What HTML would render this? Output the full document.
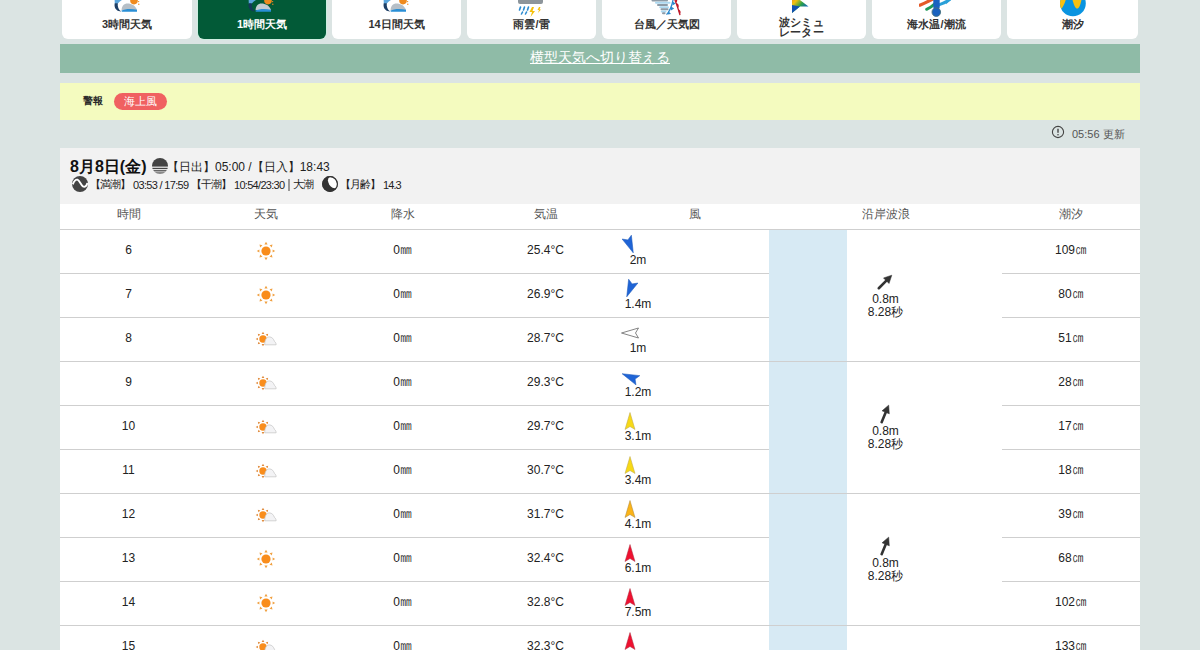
<!DOCTYPE html>
<html><head><meta charset="utf-8">
<style>
*{box-sizing:border-box}
html,body{margin:0;padding:0}
body{width:1200px;height:650px;overflow:hidden;position:relative;background:#dbe4e3;font-family:"Liberation Sans",sans-serif;color:#222}
.tab{position:absolute;top:-10px;height:49px;background:#fff;border-radius:0 0 6px 6px;text-align:center}
.tab.on{background:#025a37;box-shadow:0 0 0 1px #cdeee0}
.tab .lb{position:absolute;left:0;right:0;top:28px;font-size:11px;font-weight:bold;line-height:13px;color:#333}
.tab.on .lb{color:#fff}
.tab svg{position:absolute;top:10px}
#gbar{position:absolute;left:60px;top:44px;width:1080px;height:29px;background:#8fbba7;text-align:center;color:#fff;font-size:14px;line-height:27px}
#gbar span{text-decoration:underline}
#ybar{position:absolute;left:60px;top:83px;width:1080px;height:37px;background:#f4fbbf}
#upd{position:absolute;left:1072px;top:127px;font-size:11px;color:#555;line-height:14px}
#panel{position:absolute;left:60px;top:148px;width:1080px;height:56px;background:#f2f2f2}
#thead{position:absolute;left:60px;top:204px;width:1080px;height:26px;background:#fff;border-bottom:1px solid #cfcfcf}
.th{position:absolute;top:0;height:25px;line-height:20px;font-size:12px;color:#555;text-align:center}
#tbody{position:absolute;left:60px;top:230px;width:1080px;height:420px;background:#fff}
.row{position:absolute;left:0;width:1200px;height:44px}
.row .c{position:absolute;top:0;height:43px;line-height:40px;font-size:12px;text-align:center;color:#222}
.line{position:absolute;height:1px;background:#cfcfcf}
.wx,.ar{position:absolute}
.sp{position:absolute;left:620px;width:36px;text-align:center;font-size:12px;line-height:14px;color:#222}
.wt{position:absolute;left:769px;width:233px;text-align:center;font-size:12px;line-height:13px;color:#222}
.pt{position:absolute;font-size:11px;line-height:14px;color:#222;white-space:nowrap;letter-spacing:-0.75px}
.dg{letter-spacing:-0.5px}
.u{font-style:normal;display:inline-block;line-height:12px;transform:scaleY(1.32);transform-origin:50% 10.5px}
#blue{position:absolute;left:769px;top:230px;width:78px;height:420px;background:#d7eaf4}
</style></head><body>

<div class="tab" style="left:62px;width:130px">
<svg width="26" height="13" viewBox="0 0 26 13" style="left:52px"><circle cx="20" cy="0.6" r="3.8" fill="#ef8a1e"/><circle cx="24.6" cy="1.6" r="0.7" fill="#ef8a1e"/><circle cx="24.8" cy="4.3" r="0.7" fill="#ef8a1e"/><path d="M0.6,-1 L9.5,-1 C7,0.5 5,2 3.6,3.8 L0.8,3.8Z" fill="#5aa5dc"/><path d="M0.8,3.2 C0,6 1,9.5 4.5,11 L7.2,11.6 C4.5,9.5 3.4,6.5 3.8,3.2Z" fill="#1d3f66"/><path d="M7.6,10 C7.6,6 10,3.4 13.5,3.4 C17.5,3.4 21.5,5.5 23,10Z" fill="#b6bfc7"/><path d="M7.2,10.8 C11,8.6 18,8.6 23,9.8 L23,11.8 L8,11.8Z" fill="#2a8fd6"/></svg>
<div class="lb"><span id="m_tab1">3時間天気</span></div></div>
<div class="tab on" style="left:198px;width:128px">
<svg width="26" height="13" viewBox="0 0 26 13" style="left:50px"><circle cx="20" cy="0.6" r="3.8" fill="#ef8a1e"/><circle cx="24.6" cy="1.6" r="0.7" fill="#ef8a1e"/><circle cx="24.8" cy="4.3" r="0.7" fill="#ef8a1e"/><path d="M0.6,-1 L9.5,-1 C7,0.5 5,2 3.6,3.8 L0.8,3.8Z" fill="#5aa5dc"/><path d="M0.8,3.2 C0,6 1,9.5 4.5,11 L7.2,11.6 C4.5,9.5 3.4,6.5 3.8,3.2Z" fill="#17385a"/><path d="M7.6,10 C7.6,6 10,3.4 13.5,3.4 C17.5,3.4 21.5,5.5 23,10Z" fill="#c4ccd2"/><path d="M7.2,10.8 C11,8.6 18,8.6 23,9.8 L23,11.8 L8,11.8Z" fill="#2a8fd6"/></svg>
<div class="lb">1時間天気</div></div>
<div class="tab" style="left:332px;width:129px">
<svg width="26" height="13" viewBox="0 0 26 13" style="left:51px"><circle cx="20" cy="0.6" r="3.8" fill="#ef8a1e"/><circle cx="24.6" cy="1.6" r="0.7" fill="#ef8a1e"/><circle cx="24.8" cy="4.3" r="0.7" fill="#ef8a1e"/><path d="M0.6,-1 L9.5,-1 C7,0.5 5,2 3.6,3.8 L0.8,3.8Z" fill="#5aa5dc"/><path d="M0.8,3.2 C0,6 1,9.5 4.5,11 L7.2,11.6 C4.5,9.5 3.4,6.5 3.8,3.2Z" fill="#1d3f66"/><path d="M7.6,10 C7.6,6 10,3.4 13.5,3.4 C17.5,3.4 21.5,5.5 23,10Z" fill="#b6bfc7"/><path d="M7.2,10.8 C11,8.6 18,8.6 23,9.8 L23,11.8 L8,11.8Z" fill="#2a8fd6"/></svg>
<div class="lb">14日間天気</div></div>
<div class="tab" style="left:467px;width:129px">
<svg width="30" height="18" viewBox="0 0 30 18" style="left:50px"><rect x="1" y="-4" width="25" height="8" rx="2" fill="#8d959b"/><g stroke="#2b8ad0" stroke-width="1.6" stroke-linecap="round"><path d="M2.5,10 L3.5,7"/><path d="M6.5,10 L7.5,7"/><path d="M10.5,10 L11.5,7"/><path d="M4.5,14 L5.5,12"/><path d="M8.5,14 L9.5,12"/></g><path d="M15,7 L12.5,12 L15,12 L13.5,17 L18,11 L15.5,11 L17,7Z" fill="#f5c00a"/><path d="M22,7 L20.5,10 L22,10 L21,13 L24,9.5 L22.5,9.5 L23.5,7Z" fill="#f5c00a"/></svg>
<div class="lb">雨雲/雷</div></div>
<div class="tab" style="left:602px;width:129px">
<svg width="36" height="17" viewBox="0 0 36 17" style="left:48px"><g stroke-linecap="round" stroke-width="2"><path d="M2.5,0.6 L17,0.6" stroke="#8e9ba6"/><path d="M6,2.8 L19.5,2.8" stroke="#acd8f0"/><path d="M8,5 L17,5" stroke="#8e9ba6"/><path d="M10.2,7.2 L18,7.2" stroke="#acd8f0"/><path d="M11.5,9.3 L17.5,9.3" stroke="#8e9ba6"/><path d="M11.8,11.4 L15.5,11.4" stroke="#acd8f0"/><path d="M13,13.3 L14.5,13.3" stroke="#8e9ba6"/></g><path d="M16.5,14.6 C19.5,11.5 22,6 23.2,-1" stroke="#2b88cc" stroke-width="1.3" fill="none"/><path d="M22.2,1.2 L25.8,3.4 L22.8,5.2Z M21.1,6.6 L24.2,8.6 L20.9,10.4Z M18.5,11.2 L21,14 L17.5,14.6Z" fill="#2b88cc"/><path d="M24.6,-1 C26.5,4 28.5,9 30,15.2" stroke="#c01a2a" stroke-width="1.3" fill="none"/><path d="M26.2,3.2 C29,3.2 29.5,7 27.6,8 Z M28.2,9.4 C31,9.8 31.3,13.5 29.4,14 Z M25,-1 C27.5,-1 28,1.5 26,2.5Z" fill="#c01a2a"/></svg>
<div class="lb">台風／天気図</div></div>
<div class="tab" style="left:737px;width:129px">
<svg width="20" height="14" viewBox="0 0 20 14" style="left:54px"><defs><linearGradient id="wg" x1="0" y1="0" x2="1" y2="1"><stop offset="0" stop-color="#f47a20"/><stop offset="0.3" stop-color="#f0c010"/><stop offset="0.55" stop-color="#2aa04a"/><stop offset="0.8" stop-color="#1060c0"/></linearGradient></defs><path d="M1,-6 L17.5,6.5 L9,6.5 L1,13Z" fill="url(#wg)"/><path d="M1,5 L9,6.5 L1,13Z" fill="#1050b0"/></svg>
<div class="lb" style="top:26px;letter-spacing:0.3px">波シミュ</div><div class="lb" style="top:36px;letter-spacing:0.3px">レーター</div></div>
<div class="tab" style="left:872px;width:129px">
<svg width="36" height="17" viewBox="0 0 36 17" style="left:47px"><path d="M0.8,5.2 C4.5,3.6 9,1.6 15,-1.5" stroke="#e45a28" stroke-width="3.2" stroke-linecap="round" fill="none"/><path d="M7.6,9.3 C10.5,8.2 13,6.5 15.5,4" stroke="#1f9a58" stroke-width="3" stroke-linecap="round" fill="none"/><path d="M20.5,4.6 C24,3.6 27,2.2 31,-1" stroke="#2aa0d8" stroke-width="3" stroke-linecap="round" fill="none"/><path d="M27,4.2 L34.5,-2 L27.5,-1.5Z" fill="#2aa0d8"/><rect x="14.3" y="-4" width="6.4" height="14" rx="3" fill="#1a62c0"/><circle cx="17.3" cy="12.1" r="4.3" fill="#1a62c0" stroke="#46707e" stroke-width="0.9"/></svg>
<div class="lb">海水温/潮流</div></div>
<div class="tab" style="left:1007px;width:131px">
<svg width="28" height="18" viewBox="0 0 28 18" style="left:52px"><defs><clipPath id="tc"><circle cx="13.9" cy="3.4" r="12.9"/></clipPath></defs><circle cx="13.9" cy="3.4" r="12.9" fill="#0a94e0"/><g clip-path="url(#tc)" fill="#f7c010"><path d="M-1,-6 L7.8,-6 C7.2,0 5,6 2.2,8.8 L-1,8.8Z"/><path d="M12.6,-6 C13.4,2 16,8.6 18.1,8.6 C20.5,8.6 22.6,2 23.2,-6Z"/></g></svg>
<div class="lb"><span id="m_tab8">潮汐</span></div></div>

<div id="gbar"><span id="m_gbar">横型天気へ切り替える</span></div>
<div id="ybar">
<div style="position:absolute;left:22.5px;top:10.5px;font-size:10px;font-weight:bold;line-height:14px;color:#2a2a2a"><span id="m_kh">警報</span></div>
<div style="position:absolute;left:54px;top:10px;width:53px;height:17px;border-radius:9px;background:#f06161;color:#fff;font-size:11px;line-height:17px;text-align:center"><span id="m_badge">海上風</span></div>
</div>
<svg width="14" height="14" viewBox="0 0 14 14" style="position:absolute;left:1051px;top:125px"><circle cx="7" cy="7" r="5.6" fill="none" stroke="#444" stroke-width="1.1"/><path d="M7,3.8 L7,7.8" stroke="#444" stroke-width="1.4"/><circle cx="7" cy="9.8" r="0.8" fill="#444"/></svg>
<div id="upd"><span id="m_upd">05:56</span> 更新</div>

<div id="panel"></div>
<div id="m_date" style="position:absolute;left:70px;top:158px;font-size:16px;font-weight:bold;line-height:18px;color:#111;white-space:nowrap">8月8日(金)</div>
<svg width="16" height="16" viewBox="0 0 16 16" style="position:absolute;left:152px;top:158px"><defs><clipPath id="cc"><circle cx="8" cy="8" r="8"/></clipPath></defs><g clip-path="url(#cc)" fill="#444"><rect x="0" y="0" width="16" height="8.6"/><rect x="0" y="9.8" width="16" height="1.3"/><rect x="0" y="12.2" width="16" height="1.2"/><rect x="0" y="14.4" width="16" height="1.2"/></g></svg>
<div id="m_l1" class="pt" style="left:167px;top:160px;font-size:12px;letter-spacing:0">【日出】05:00 /【日入】18:43</div>
<svg width="16" height="16" viewBox="0 0 16 16" style="position:absolute;left:72px;top:176px"><circle cx="8" cy="8" r="8" fill="#444"/><path d="M0.8,8.3 C2.5,4.2 4,3.4 5.5,3.7 C7.5,4.3 9,9 11,10.5 C13,11.5 14.5,10 15.4,7" stroke="#fff" stroke-width="1.9" fill="none"/></svg>
<div id="m_a" class="pt" style="left:89.5px;top:177px">【満潮】</div>
<div id="m_b" class="pt dg" style="left:133px;top:178px;letter-spacing:-0.67px">03:53 / 17:59</div>
<div id="m_c" class="pt" style="left:190.5px;top:177px">【干潮】</div>
<div id="m_d" class="pt dg" style="left:234px;top:178px;letter-spacing:-0.7px">10:54/23:30</div>
<div style="position:absolute;left:288px;top:179px;width:1.5px;height:12px;background:#999"></div>
<div id="m_f" class="pt" style="left:292.5px;top:177px">大潮</div>
<svg width="16" height="16" viewBox="0 0 16 16" style="position:absolute;left:322px;top:176px"><circle cx="8" cy="8" r="7.9" fill="#333"/><ellipse cx="10.6" cy="6.6" rx="3.9" ry="6.2" transform="rotate(-32 10.6 6.6)" fill="#fff"/><circle cx="8" cy="8" r="7.4" fill="none" stroke="#333" stroke-width="1.1"/></svg>
<div id="m_g" class="pt" style="left:339.5px;top:177px">【月齢】</div>
<div id="m_h" class="pt dg" style="left:383px;top:178px;letter-spacing:-0.9px">14.3</div>
<div id="thead">
<div class="th" style="left:0;width:137px"><span id="m_th">時間</span></div>
<div class="th" style="left:137px;width:137px">天気</div>
<div class="th" style="left:274px;width:137px">降水</div>
<div class="th" style="left:411px;width:149px">気温</div>
<div class="th" style="left:560px;width:149px">風</div>
<div class="th" style="left:709px;width:233px">沿岸波浪</div>
<div class="th" style="left:942px;width:138px">潮汐</div>
</div>
<div id="tbody"></div>
<div id="blue"></div>
<div class="line" style="left:60px;top:273px;width:709px"></div>
<div class="line" style="left:1002px;top:273px;width:138px"></div>
<div class="line" style="left:60px;top:317px;width:709px"></div>
<div class="line" style="left:1002px;top:317px;width:138px"></div>
<div class="line" style="left:60px;top:361px;width:1080px"></div>
<div class="line" style="left:60px;top:405px;width:709px"></div>
<div class="line" style="left:1002px;top:405px;width:138px"></div>
<div class="line" style="left:60px;top:449px;width:709px"></div>
<div class="line" style="left:1002px;top:449px;width:138px"></div>
<div class="line" style="left:60px;top:493px;width:1080px"></div>
<div class="line" style="left:60px;top:537px;width:709px"></div>
<div class="line" style="left:1002px;top:537px;width:138px"></div>
<div class="line" style="left:60px;top:581px;width:709px"></div>
<div class="line" style="left:1002px;top:581px;width:138px"></div>
<div class="line" style="left:60px;top:625px;width:1080px"></div>
<div class="row" style="top:230px">
<div class="c" style="left:60px;width:137px"><span id="m_r0_h">6</span></div>
<div class="c" style="left:334px;width:137px"><span id="m_r0_p">0<i class="u">㎜</i></span></div>
<div class="c" style="left:471px;width:149px"><span id="m_r0_t">25.4°C</span></div>
<div class="c" style="left:1002px;width:138px"><span id="m_r0_d">109<i class="u">㎝</i></span></div>
</div>
<svg class="wx" width="24" height="24" viewBox="-12 -12 24 24" style="left:253.5px;top:239.4px">
<circle r="4.6" fill="#f98d1c"/>
<g fill="#f0a040"><path d="M0,-9.2 L1.6,-6.6 L-1.6,-6.6Z" transform="rotate(0)"/><path d="M0,-9.2 L1.6,-6.6 L-1.6,-6.6Z" transform="rotate(45)"/><path d="M0,-9.2 L1.6,-6.6 L-1.6,-6.6Z" transform="rotate(90)"/><path d="M0,-9.2 L1.6,-6.6 L-1.6,-6.6Z" transform="rotate(135)"/><path d="M0,-9.2 L1.6,-6.6 L-1.6,-6.6Z" transform="rotate(180)"/><path d="M0,-9.2 L1.6,-6.6 L-1.6,-6.6Z" transform="rotate(225)"/><path d="M0,-9.2 L1.6,-6.6 L-1.6,-6.6Z" transform="rotate(270)"/><path d="M0,-9.2 L1.6,-6.6 L-1.6,-6.6Z" transform="rotate(315)"/></g></svg>
<svg class="ar" width="24" height="24" viewBox="-12 -12 24 24" style="left:618px;top:233px"><path d="M0,-8.5 L5,8.5 L0,5.5 L-5,8.5 Z" fill="#1f64d6" stroke="#1a56b8" stroke-width="0.5" stroke-linejoin="round" transform="rotate(157.5)"/></svg>
<div class="sp" style="top:253px"><span id="m_r0_s">2m</span></div>
<div class="row" style="top:274px">
<div class="c" style="left:60px;width:137px"><span>7</span></div>
<div class="c" style="left:334px;width:137px"><span>0<i class="u">㎜</i></span></div>
<div class="c" style="left:471px;width:149px"><span>26.9°C</span></div>
<div class="c" style="left:1002px;width:138px"><span>80<i class="u">㎝</i></span></div>
</div>
<svg class="wx" width="24" height="24" viewBox="-12 -12 24 24" style="left:253.5px;top:283.4px">
<circle r="4.6" fill="#f98d1c"/>
<g fill="#f0a040"><path d="M0,-9.2 L1.6,-6.6 L-1.6,-6.6Z" transform="rotate(0)"/><path d="M0,-9.2 L1.6,-6.6 L-1.6,-6.6Z" transform="rotate(45)"/><path d="M0,-9.2 L1.6,-6.6 L-1.6,-6.6Z" transform="rotate(90)"/><path d="M0,-9.2 L1.6,-6.6 L-1.6,-6.6Z" transform="rotate(135)"/><path d="M0,-9.2 L1.6,-6.6 L-1.6,-6.6Z" transform="rotate(180)"/><path d="M0,-9.2 L1.6,-6.6 L-1.6,-6.6Z" transform="rotate(225)"/><path d="M0,-9.2 L1.6,-6.6 L-1.6,-6.6Z" transform="rotate(270)"/><path d="M0,-9.2 L1.6,-6.6 L-1.6,-6.6Z" transform="rotate(315)"/></g></svg>
<svg class="ar" width="24" height="24" viewBox="-12 -12 24 24" style="left:618px;top:277px"><path d="M0,-8.5 L5,8.5 L0,5.5 L-5,8.5 Z" fill="#1f64d6" stroke="#1a56b8" stroke-width="0.5" stroke-linejoin="round" transform="rotate(202.5)"/></svg>
<div class="sp" style="top:297px"><span>1.4m</span></div>
<div class="row" style="top:318px">
<div class="c" style="left:60px;width:137px"><span>8</span></div>
<div class="c" style="left:334px;width:137px"><span>0<i class="u">㎜</i></span></div>
<div class="c" style="left:471px;width:149px"><span>28.7°C</span></div>
<div class="c" style="left:1002px;width:138px"><span>51<i class="u">㎝</i></span></div>
</div>
<svg class="wx" width="30" height="24" viewBox="-12 -12 30 24" style="left:250.60000000000002px;top:327px">
<circle cx="0" cy="0" r="3.7" fill="#f98d1c"/>
<g fill="#e08a3a"><path d="M0,-7.3 L1.35,-5.1 L-1.35,-5.1Z" transform="rotate(0)"/><path d="M0,-7.3 L1.35,-5.1 L-1.35,-5.1Z" transform="rotate(45)"/><path d="M0,-7.3 L1.35,-5.1 L-1.35,-5.1Z" transform="rotate(90)"/><path d="M0,-7.3 L1.35,-5.1 L-1.35,-5.1Z" transform="rotate(135)"/><path d="M0,-7.3 L1.35,-5.1 L-1.35,-5.1Z" transform="rotate(180)"/><path d="M0,-7.3 L1.35,-5.1 L-1.35,-5.1Z" transform="rotate(225)"/><path d="M0,-7.3 L1.35,-5.1 L-1.35,-5.1Z" transform="rotate(270)"/><path d="M0,-7.3 L1.35,-5.1 L-1.35,-5.1Z" transform="rotate(315)"/></g>
<path d="M1.8,5.8 C1.5,1 3.5,-2.1 6.5,-2.1 C9,-2.1 10.5,0 11.5,2.4 C12.6,3.4 13.3,4.6 13.1,5.8 Z" fill="#f3f3f5" stroke="#c6c6c6" stroke-width="0.75"/>
</svg>
<svg class="ar" width="24" height="24" viewBox="-12 -12 24 24" style="left:618px;top:321px"><path d="M0,-8.5 L5,8.5 L0,5.5 L-5,8.5 Z" fill="#ffffff" stroke="#666" stroke-width="0.8" stroke-linejoin="round" transform="rotate(270)"/></svg>
<div class="sp" style="top:341px"><span>1m</span></div>
<div class="row" style="top:362px">
<div class="c" style="left:60px;width:137px"><span>9</span></div>
<div class="c" style="left:334px;width:137px"><span>0<i class="u">㎜</i></span></div>
<div class="c" style="left:471px;width:149px"><span>29.3°C</span></div>
<div class="c" style="left:1002px;width:138px"><span>28<i class="u">㎝</i></span></div>
</div>
<svg class="wx" width="30" height="24" viewBox="-12 -12 30 24" style="left:250.60000000000002px;top:371px">
<circle cx="0" cy="0" r="3.7" fill="#f98d1c"/>
<g fill="#e08a3a"><path d="M0,-7.3 L1.35,-5.1 L-1.35,-5.1Z" transform="rotate(0)"/><path d="M0,-7.3 L1.35,-5.1 L-1.35,-5.1Z" transform="rotate(45)"/><path d="M0,-7.3 L1.35,-5.1 L-1.35,-5.1Z" transform="rotate(90)"/><path d="M0,-7.3 L1.35,-5.1 L-1.35,-5.1Z" transform="rotate(135)"/><path d="M0,-7.3 L1.35,-5.1 L-1.35,-5.1Z" transform="rotate(180)"/><path d="M0,-7.3 L1.35,-5.1 L-1.35,-5.1Z" transform="rotate(225)"/><path d="M0,-7.3 L1.35,-5.1 L-1.35,-5.1Z" transform="rotate(270)"/><path d="M0,-7.3 L1.35,-5.1 L-1.35,-5.1Z" transform="rotate(315)"/></g>
<path d="M1.8,5.8 C1.5,1 3.5,-2.1 6.5,-2.1 C9,-2.1 10.5,0 11.5,2.4 C12.6,3.4 13.3,4.6 13.1,5.8 Z" fill="#f3f3f5" stroke="#c6c6c6" stroke-width="0.75"/>
</svg>
<svg class="ar" width="24" height="24" viewBox="-12 -12 24 24" style="left:618px;top:365px"><path d="M0,-8.5 L5,8.5 L0,5.5 L-5,8.5 Z" fill="#1f64d6" stroke="#1a56b8" stroke-width="0.5" stroke-linejoin="round" transform="rotate(292.5)"/></svg>
<div class="sp" style="top:385px"><span>1.2m</span></div>
<div class="row" style="top:406px">
<div class="c" style="left:60px;width:137px"><span id="m_r4_h">10</span></div>
<div class="c" style="left:334px;width:137px"><span id="m_r4_p">0<i class="u">㎜</i></span></div>
<div class="c" style="left:471px;width:149px"><span id="m_r4_t">29.7°C</span></div>
<div class="c" style="left:1002px;width:138px"><span id="m_r4_d">17<i class="u">㎝</i></span></div>
</div>
<svg class="wx" width="30" height="24" viewBox="-12 -12 30 24" style="left:250.60000000000002px;top:415px">
<circle cx="0" cy="0" r="3.7" fill="#f98d1c"/>
<g fill="#e08a3a"><path d="M0,-7.3 L1.35,-5.1 L-1.35,-5.1Z" transform="rotate(0)"/><path d="M0,-7.3 L1.35,-5.1 L-1.35,-5.1Z" transform="rotate(45)"/><path d="M0,-7.3 L1.35,-5.1 L-1.35,-5.1Z" transform="rotate(90)"/><path d="M0,-7.3 L1.35,-5.1 L-1.35,-5.1Z" transform="rotate(135)"/><path d="M0,-7.3 L1.35,-5.1 L-1.35,-5.1Z" transform="rotate(180)"/><path d="M0,-7.3 L1.35,-5.1 L-1.35,-5.1Z" transform="rotate(225)"/><path d="M0,-7.3 L1.35,-5.1 L-1.35,-5.1Z" transform="rotate(270)"/><path d="M0,-7.3 L1.35,-5.1 L-1.35,-5.1Z" transform="rotate(315)"/></g>
<path d="M1.8,5.8 C1.5,1 3.5,-2.1 6.5,-2.1 C9,-2.1 10.5,0 11.5,2.4 C12.6,3.4 13.3,4.6 13.1,5.8 Z" fill="#f3f3f5" stroke="#c6c6c6" stroke-width="0.75"/>
</svg>
<svg class="ar" width="24" height="24" viewBox="-12 -12 24 24" style="left:618px;top:409px"><path d="M0,-8.5 L5,8.5 L0,5.5 L-5,8.5 Z" fill="#f7d917" stroke="#b8a24a" stroke-width="0.5" stroke-linejoin="round" transform="rotate(0)"/></svg>
<div class="sp" style="top:429px"><span id="m_r4_s">3.1m</span></div>
<div class="row" style="top:450px">
<div class="c" style="left:60px;width:137px"><span>11</span></div>
<div class="c" style="left:334px;width:137px"><span>0<i class="u">㎜</i></span></div>
<div class="c" style="left:471px;width:149px"><span>30.7°C</span></div>
<div class="c" style="left:1002px;width:138px"><span>18<i class="u">㎝</i></span></div>
</div>
<svg class="wx" width="30" height="24" viewBox="-12 -12 30 24" style="left:250.60000000000002px;top:459px">
<circle cx="0" cy="0" r="3.7" fill="#f98d1c"/>
<g fill="#e08a3a"><path d="M0,-7.3 L1.35,-5.1 L-1.35,-5.1Z" transform="rotate(0)"/><path d="M0,-7.3 L1.35,-5.1 L-1.35,-5.1Z" transform="rotate(45)"/><path d="M0,-7.3 L1.35,-5.1 L-1.35,-5.1Z" transform="rotate(90)"/><path d="M0,-7.3 L1.35,-5.1 L-1.35,-5.1Z" transform="rotate(135)"/><path d="M0,-7.3 L1.35,-5.1 L-1.35,-5.1Z" transform="rotate(180)"/><path d="M0,-7.3 L1.35,-5.1 L-1.35,-5.1Z" transform="rotate(225)"/><path d="M0,-7.3 L1.35,-5.1 L-1.35,-5.1Z" transform="rotate(270)"/><path d="M0,-7.3 L1.35,-5.1 L-1.35,-5.1Z" transform="rotate(315)"/></g>
<path d="M1.8,5.8 C1.5,1 3.5,-2.1 6.5,-2.1 C9,-2.1 10.5,0 11.5,2.4 C12.6,3.4 13.3,4.6 13.1,5.8 Z" fill="#f3f3f5" stroke="#c6c6c6" stroke-width="0.75"/>
</svg>
<svg class="ar" width="24" height="24" viewBox="-12 -12 24 24" style="left:618px;top:453px"><path d="M0,-8.5 L5,8.5 L0,5.5 L-5,8.5 Z" fill="#f7d917" stroke="#b8a24a" stroke-width="0.5" stroke-linejoin="round" transform="rotate(0)"/></svg>
<div class="sp" style="top:473px"><span>3.4m</span></div>
<div class="row" style="top:494px">
<div class="c" style="left:60px;width:137px"><span>12</span></div>
<div class="c" style="left:334px;width:137px"><span>0<i class="u">㎜</i></span></div>
<div class="c" style="left:471px;width:149px"><span>31.7°C</span></div>
<div class="c" style="left:1002px;width:138px"><span>39<i class="u">㎝</i></span></div>
</div>
<svg class="wx" width="30" height="24" viewBox="-12 -12 30 24" style="left:250.60000000000002px;top:503px">
<circle cx="0" cy="0" r="3.7" fill="#f98d1c"/>
<g fill="#e08a3a"><path d="M0,-7.3 L1.35,-5.1 L-1.35,-5.1Z" transform="rotate(0)"/><path d="M0,-7.3 L1.35,-5.1 L-1.35,-5.1Z" transform="rotate(45)"/><path d="M0,-7.3 L1.35,-5.1 L-1.35,-5.1Z" transform="rotate(90)"/><path d="M0,-7.3 L1.35,-5.1 L-1.35,-5.1Z" transform="rotate(135)"/><path d="M0,-7.3 L1.35,-5.1 L-1.35,-5.1Z" transform="rotate(180)"/><path d="M0,-7.3 L1.35,-5.1 L-1.35,-5.1Z" transform="rotate(225)"/><path d="M0,-7.3 L1.35,-5.1 L-1.35,-5.1Z" transform="rotate(270)"/><path d="M0,-7.3 L1.35,-5.1 L-1.35,-5.1Z" transform="rotate(315)"/></g>
<path d="M1.8,5.8 C1.5,1 3.5,-2.1 6.5,-2.1 C9,-2.1 10.5,0 11.5,2.4 C12.6,3.4 13.3,4.6 13.1,5.8 Z" fill="#f3f3f5" stroke="#c6c6c6" stroke-width="0.75"/>
</svg>
<svg class="ar" width="24" height="24" viewBox="-12 -12 24 24" style="left:618px;top:497px"><path d="M0,-8.5 L5,8.5 L0,5.5 L-5,8.5 Z" fill="#fbb418" stroke="#a8843a" stroke-width="0.5" stroke-linejoin="round" transform="rotate(0)"/></svg>
<div class="sp" style="top:517px"><span>4.1m</span></div>
<div class="row" style="top:538px">
<div class="c" style="left:60px;width:137px"><span>13</span></div>
<div class="c" style="left:334px;width:137px"><span>0<i class="u">㎜</i></span></div>
<div class="c" style="left:471px;width:149px"><span>32.4°C</span></div>
<div class="c" style="left:1002px;width:138px"><span>68<i class="u">㎝</i></span></div>
</div>
<svg class="wx" width="24" height="24" viewBox="-12 -12 24 24" style="left:253.5px;top:547.4px">
<circle r="4.6" fill="#f98d1c"/>
<g fill="#f0a040"><path d="M0,-9.2 L1.6,-6.6 L-1.6,-6.6Z" transform="rotate(0)"/><path d="M0,-9.2 L1.6,-6.6 L-1.6,-6.6Z" transform="rotate(45)"/><path d="M0,-9.2 L1.6,-6.6 L-1.6,-6.6Z" transform="rotate(90)"/><path d="M0,-9.2 L1.6,-6.6 L-1.6,-6.6Z" transform="rotate(135)"/><path d="M0,-9.2 L1.6,-6.6 L-1.6,-6.6Z" transform="rotate(180)"/><path d="M0,-9.2 L1.6,-6.6 L-1.6,-6.6Z" transform="rotate(225)"/><path d="M0,-9.2 L1.6,-6.6 L-1.6,-6.6Z" transform="rotate(270)"/><path d="M0,-9.2 L1.6,-6.6 L-1.6,-6.6Z" transform="rotate(315)"/></g></svg>
<svg class="ar" width="24" height="24" viewBox="-12 -12 24 24" style="left:618px;top:541px"><path d="M0,-8.5 L5,8.5 L0,5.5 L-5,8.5 Z" fill="#ef1030" stroke="#a83040" stroke-width="0.5" stroke-linejoin="round" transform="rotate(0)"/></svg>
<div class="sp" style="top:561px"><span>6.1m</span></div>
<div class="row" style="top:582px">
<div class="c" style="left:60px;width:137px"><span>14</span></div>
<div class="c" style="left:334px;width:137px"><span>0<i class="u">㎜</i></span></div>
<div class="c" style="left:471px;width:149px"><span>32.8°C</span></div>
<div class="c" style="left:1002px;width:138px"><span>102<i class="u">㎝</i></span></div>
</div>
<svg class="wx" width="24" height="24" viewBox="-12 -12 24 24" style="left:253.5px;top:591.4px">
<circle r="4.6" fill="#f98d1c"/>
<g fill="#f0a040"><path d="M0,-9.2 L1.6,-6.6 L-1.6,-6.6Z" transform="rotate(0)"/><path d="M0,-9.2 L1.6,-6.6 L-1.6,-6.6Z" transform="rotate(45)"/><path d="M0,-9.2 L1.6,-6.6 L-1.6,-6.6Z" transform="rotate(90)"/><path d="M0,-9.2 L1.6,-6.6 L-1.6,-6.6Z" transform="rotate(135)"/><path d="M0,-9.2 L1.6,-6.6 L-1.6,-6.6Z" transform="rotate(180)"/><path d="M0,-9.2 L1.6,-6.6 L-1.6,-6.6Z" transform="rotate(225)"/><path d="M0,-9.2 L1.6,-6.6 L-1.6,-6.6Z" transform="rotate(270)"/><path d="M0,-9.2 L1.6,-6.6 L-1.6,-6.6Z" transform="rotate(315)"/></g></svg>
<svg class="ar" width="24" height="24" viewBox="-12 -12 24 24" style="left:618px;top:585px"><path d="M0,-8.5 L5,8.5 L0,5.5 L-5,8.5 Z" fill="#ef1030" stroke="#a83040" stroke-width="0.5" stroke-linejoin="round" transform="rotate(0)"/></svg>
<div class="sp" style="top:605px"><span>7.5m</span></div>
<div class="row" style="top:626px">
<div class="c" style="left:60px;width:137px"><span>15</span></div>
<div class="c" style="left:334px;width:137px"><span>0<i class="u">㎜</i></span></div>
<div class="c" style="left:471px;width:149px"><span>32.3°C</span></div>
<div class="c" style="left:1002px;width:138px"><span>133<i class="u">㎝</i></span></div>
</div>
<svg class="wx" width="30" height="24" viewBox="-12 -12 30 24" style="left:250.60000000000002px;top:635px">
<circle cx="0" cy="0" r="3.7" fill="#f98d1c"/>
<g fill="#e08a3a"><path d="M0,-7.3 L1.35,-5.1 L-1.35,-5.1Z" transform="rotate(0)"/><path d="M0,-7.3 L1.35,-5.1 L-1.35,-5.1Z" transform="rotate(45)"/><path d="M0,-7.3 L1.35,-5.1 L-1.35,-5.1Z" transform="rotate(90)"/><path d="M0,-7.3 L1.35,-5.1 L-1.35,-5.1Z" transform="rotate(135)"/><path d="M0,-7.3 L1.35,-5.1 L-1.35,-5.1Z" transform="rotate(180)"/><path d="M0,-7.3 L1.35,-5.1 L-1.35,-5.1Z" transform="rotate(225)"/><path d="M0,-7.3 L1.35,-5.1 L-1.35,-5.1Z" transform="rotate(270)"/><path d="M0,-7.3 L1.35,-5.1 L-1.35,-5.1Z" transform="rotate(315)"/></g>
<path d="M1.8,5.8 C1.5,1 3.5,-2.1 6.5,-2.1 C9,-2.1 10.5,0 11.5,2.4 C12.6,3.4 13.3,4.6 13.1,5.8 Z" fill="#f3f3f5" stroke="#c6c6c6" stroke-width="0.75"/>
</svg>
<svg class="ar" width="24" height="24" viewBox="-12 -12 24 24" style="left:618px;top:629px"><path d="M0,-8.5 L5,8.5 L0,5.5 L-5,8.5 Z" fill="#ef1030" stroke="#a83040" stroke-width="0.5" stroke-linejoin="round" transform="rotate(0)"/></svg>
<svg width="24" height="24" viewBox="-12 -12 24 24" style="position:absolute;left:873.2px;top:270.2px"><g transform="rotate(45)"><path d="M0,8.8 L0,-3" stroke="#333" stroke-width="2.6" stroke-linecap="round"/><path d="M0,-9.6 L3.9,-1.8 L-3.9,-1.8 Z" fill="#333" stroke="#333" stroke-width="0.5" stroke-linejoin="round"/></g></svg>
<div class="wt" style="top:293px">0.8m<br>8.28秒</div>
<svg width="24" height="24" viewBox="-12 -12 24 24" style="position:absolute;left:873.2px;top:402.2px"><g transform="rotate(22.5)"><path d="M0,8.8 L0,-3" stroke="#333" stroke-width="2.6" stroke-linecap="round"/><path d="M0,-9.6 L3.9,-1.8 L-3.9,-1.8 Z" fill="#333" stroke="#333" stroke-width="0.5" stroke-linejoin="round"/></g></svg>
<div class="wt" style="top:425px">0.8m<br>8.28秒</div>
<svg width="24" height="24" viewBox="-12 -12 24 24" style="position:absolute;left:873.2px;top:534.2px"><g transform="rotate(22.5)"><path d="M0,8.8 L0,-3" stroke="#333" stroke-width="2.6" stroke-linecap="round"/><path d="M0,-9.6 L3.9,-1.8 L-3.9,-1.8 Z" fill="#333" stroke="#333" stroke-width="0.5" stroke-linejoin="round"/></g></svg>
<div class="wt" style="top:557px">0.8m<br>8.28秒</div>
<svg width="24" height="24" viewBox="-12 -12 24 24" style="position:absolute;left:873.2px;top:666.2px"><g transform="rotate(22.5)"><path d="M0,8.8 L0,-3" stroke="#333" stroke-width="2.6" stroke-linecap="round"/><path d="M0,-9.6 L3.9,-1.8 L-3.9,-1.8 Z" fill="#333" stroke="#333" stroke-width="0.5" stroke-linejoin="round"/></g></svg>
<div class="wt" style="top:689px">0.8m<br>8.28秒</div>
</body></html>
